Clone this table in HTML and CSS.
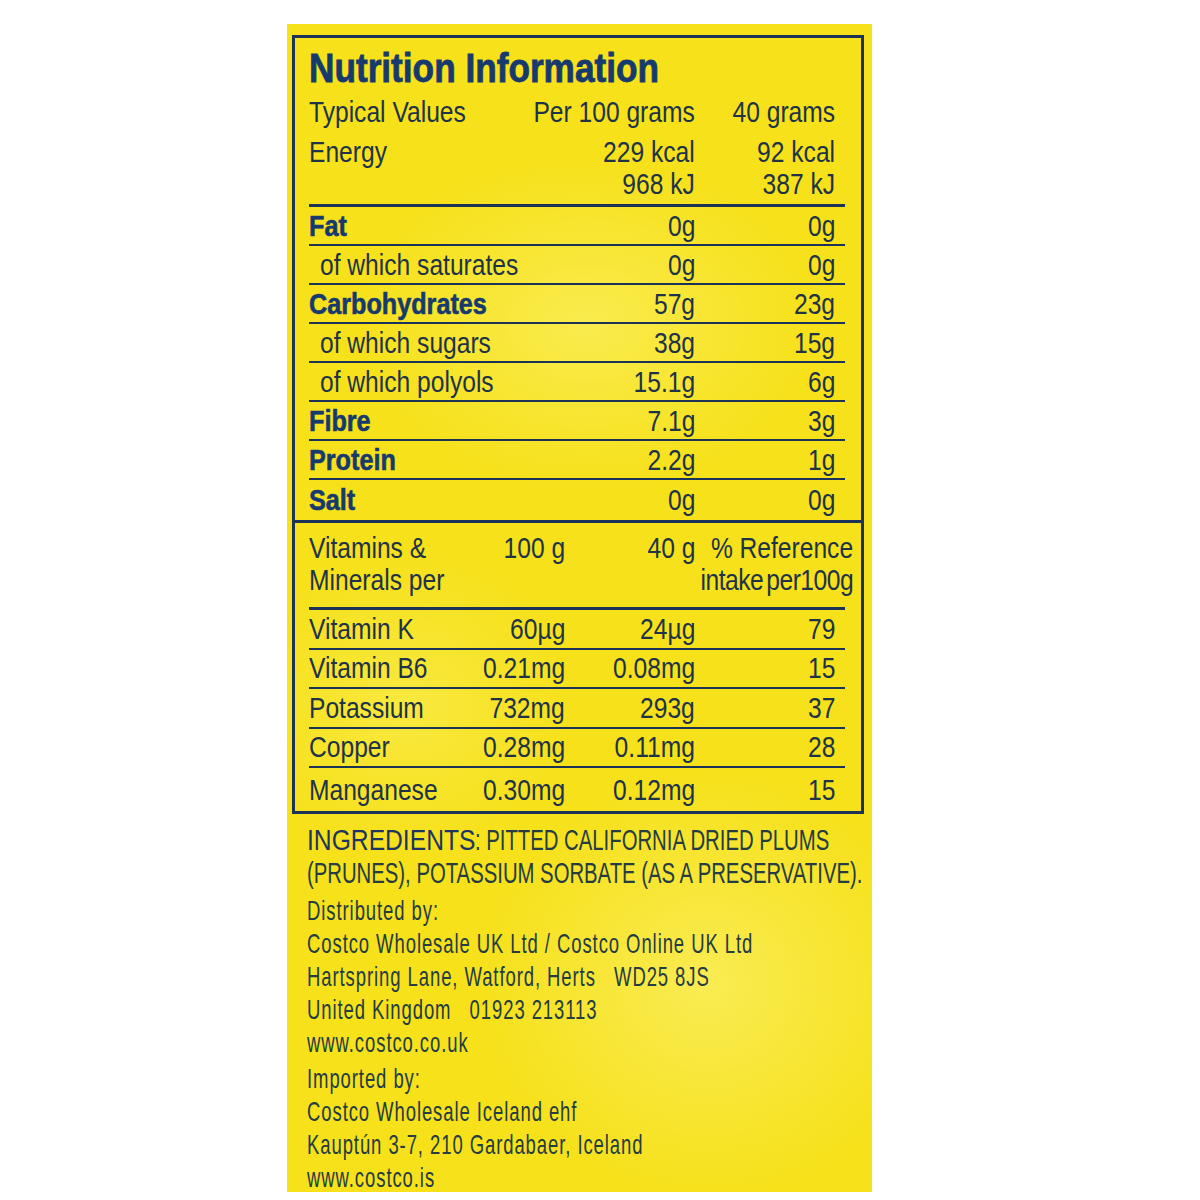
FILE: index.html
```html
<!DOCTYPE html>
<html lang="en">
<head>
<meta charset="utf-8">
<title>Nutrition Information</title>
<link rel="stylesheet" href="styles.css">
</head>
<body>
<div class="panel">
  <div class="box">
    <section class="nut">
      <h1 class="title"><span class="t tt">Nutrition Information</span></h1>
      <div class="row head"><span class="l"><span class="t">Typical Values</span></span><span class="c"><span class="t">Per 100 grams</span></span><span class="c"><span class="t">40 grams</span></span></div>
      <div class="row energy"><span class="l"><span class="t">Energy</span></span><span class="c"><span class="t">229 kcal<br>968 kJ</span></span><span class="c"><span class="t">92 kcal<br>387 kJ</span></span></div>
      <div class="row line"><span class="l"><span class="t b">Fat</span></span><span class="c"><span class="t">0g</span></span><span class="c"><span class="t">0g</span></span></div>
      <div class="row line"><span class="l sub"><span class="t">of which saturates</span></span><span class="c"><span class="t">0g</span></span><span class="c"><span class="t">0g</span></span></div>
      <div class="row line"><span class="l"><span class="t b">Carbohydrates</span></span><span class="c"><span class="t">57g</span></span><span class="c"><span class="t">23g</span></span></div>
      <div class="row line"><span class="l sub"><span class="t">of which sugars</span></span><span class="c"><span class="t">38g</span></span><span class="c"><span class="t">15g</span></span></div>
      <div class="row line"><span class="l sub"><span class="t">of which polyols</span></span><span class="c"><span class="t">15.1g</span></span><span class="c"><span class="t">6g</span></span></div>
      <div class="row line"><span class="l"><span class="t b">Fibre</span></span><span class="c"><span class="t">7.1g</span></span><span class="c"><span class="t">3g</span></span></div>
      <div class="row line"><span class="l"><span class="t b">Protein</span></span><span class="c"><span class="t">2.2g</span></span><span class="c"><span class="t">1g</span></span></div>
      <div class="row last"><span class="l"><span class="t b">Salt</span></span><span class="c"><span class="t">0g</span></span><span class="c"><span class="t">0g</span></span></div>
    </section>
    <section class="vit">
      <div class="vrow vhead"><span class="l"><span class="t">Vitamins &amp;<br>Minerals per</span></span><span class="c"><span class="t">100 g</span></span><span class="c"><span class="t">40 g</span></span><span class="c ref"><span class="t">% Reference<br><span class="tight">intake per100g</span></span></span></div>
      <div class="vrow line"><span class="l"><span class="t">Vitamin K</span></span><span class="c"><span class="t">60µg</span></span><span class="c"><span class="t">24µg</span></span><span class="c"><span class="t">79</span></span></div>
      <div class="vrow line"><span class="l"><span class="t">Vitamin B6</span></span><span class="c"><span class="t">0.21mg</span></span><span class="c"><span class="t">0.08mg</span></span><span class="c"><span class="t">15</span></span></div>
      <div class="vrow line"><span class="l"><span class="t">Potassium</span></span><span class="c"><span class="t">732mg</span></span><span class="c"><span class="t">293g</span></span><span class="c"><span class="t">37</span></span></div>
      <div class="vrow line"><span class="l"><span class="t">Copper</span></span><span class="c"><span class="t">0.28mg</span></span><span class="c"><span class="t">0.11mg</span></span><span class="c"><span class="t">28</span></span></div>
      <div class="vrow last"><span class="l"><span class="t">Manganese</span></span><span class="c"><span class="t">0.30mg</span></span><span class="c"><span class="t">0.12mg</span></span><span class="c"><span class="t">15</span></span></div>
    </section>
  </div>
  <div class="ingr">
    <div class="ing">
      <div class="iline"><span class="ingh">INGREDIENTS</span><span class="ingt">: PITTED CALIFORNIA DRIED PLUMS</span></div>
      <div class="iline"><span class="ingt">(PRUNES), POTASSIUM SORBATE (AS A PRESERVATIVE).</span></div>
    </div>
    <p class="addr">Distributed by:<br>Costco Wholesale UK Ltd / Costco Online UK Ltd<br>Hartspring Lane, Watford, Herts&nbsp;&nbsp;&nbsp;WD25 8JS<br>United Kingdom&nbsp;&nbsp;&nbsp;01923 213113<br>www.costco.co.uk</p>
    <p class="addr">Imported by:<br>Costco Wholesale Iceland ehf<br>Kauptún 3-7, 210 Gardabaer, Iceland<br>www.costco.is</p>
  </div>
</div>
</body>
</html>
```
FILE: styles.css
```css
html, body {
  margin: 0;
  padding: 0;
  background: #ffffff;
}
body {
  font-family: "Liberation Sans", Arial, sans-serif;
  color: #1e3348;
}
.panel {
  margin: 24px 0 0 287px;
  width: 585px;
  height: 1168px;
  box-sizing: border-box;
  padding: 11px 8px 0 5px;
  background:
    radial-gradient(ellipse 300px 220px at 300px 300px, rgba(255, 248, 140, 0.45), rgba(255, 248, 140, 0) 75%),
    radial-gradient(ellipse 300px 280px at 420px 960px, rgba(255, 248, 150, 0.45), rgba(255, 248, 150, 0) 75%),
    radial-gradient(ellipse 220px 200px at 120px 680px, rgba(255, 246, 130, 0.35), rgba(255, 246, 130, 0) 75%),
    #f6e11b;
}
.box {
  border: 3px solid #1a3357;
  width: 572px;
  box-sizing: border-box;
}

/* condensed text simulation */
.t {
  display: block;
  flex-shrink: 0;
  white-space: nowrap;
  transform: scaleX(0.82);
  transform-origin: 0 50%;
}
.c .t {
  text-align: right;
  transform-origin: 100% 50%;
}
.l, .c {
  display: flex;
  min-width: 0;
}
.c { justify-content: flex-end; }

.nut {
  padding: 0 16px 0 14px;
}
.title {
  margin: 0;
  padding-top: 8px;
  height: 46px;
  line-height: 44px;
  font-size: 40px;
  font-weight: 700;
  color: #163a6e;
}
.tt {
  transform: scaleX(0.88);
  -webkit-text-stroke: 0.8px #163a6e;
}
.row {
  display: grid;
  grid-template-columns: 1fr 160px 140px;
  align-items: center;
  font-size: 30px;
  padding-right: 10px;
}
.head { height: 40px; }
.energy {
  align-items: start;
  margin-top: 4px;
  line-height: 32px;
  padding-bottom: 4px;
  border-bottom: 3px solid #1a3357;
}
.line {
  height: 37px;
  border-bottom: 2px solid #1a3357;
}
.nut .last { height: 40px; }
.b {
  font-weight: 700;
  color: #163a6e;
  transform: scaleX(0.84);
  -webkit-text-stroke: 0.6px #163a6e;
}
.sub { padding-left: 11px; }

.vit {
  border-top: 3px solid #1a3357;
  padding: 0 16px 0 14px;
}
.vrow {
  display: grid;
  grid-template-columns: 1fr 120px 130px 140px;
  align-items: center;
  font-size: 30px;
  padding-right: 10px;
}
.vit .line { height: 37.5px; }
.vit .last { height: 43px; }
.vhead {
  align-items: start;
  line-height: 32px;
  padding-top: 9px;
  padding-bottom: 11px;
  border-bottom: 3px solid #1a3357;
}
.vhead .ref { margin-right: -18px; }
.tight { letter-spacing: -0.6px; word-spacing: -4px; }

.ingr {
  padding: 10px 0 0 15px;
  color: #243c42;
}
.ing {
  font-size: 29px;
  line-height: 33px;
  margin-bottom: 4px;
}
.iline {
  display: flex;
  white-space: nowrap;
}
.ingh {
  flex-shrink: 0;
  color: #1d3560;
  transform: scaleX(0.85);
  transform-origin: 0 50%;
  margin-right: -30px;
}
.ingt {
  flex-shrink: 0;
  transform: scaleX(0.70);
  transform-origin: 0 50%;
}
.addr {
  margin: 0 0 3px;
  font-size: 28px;
  line-height: 33px;
  letter-spacing: 1.4px;
  white-space: nowrap;
  transform: scaleX(0.66);
  transform-origin: 0 50%;
}
```
